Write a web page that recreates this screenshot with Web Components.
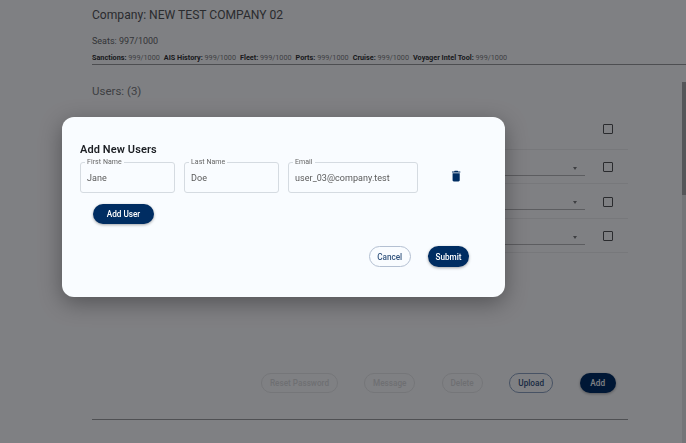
<!DOCTYPE html>
<html>
<head>
<meta charset="utf-8">
<title>Add New Users</title>
<style>
  html, body { margin: 0; height: 100%; overflow: hidden; background: #fff; }
  body { font-family: Roboto, "Liberation Sans", sans-serif; }
</style>
</head>
<body>
<company-page></company-page>
<add-users-dialog></add-users-dialog>

<script>
const navy = "#002d62";

class PillButton extends HTMLElement {
  constructor(...args) {
    super(...args);
    this.attachShadow({ mode: "open" }).innerHTML = `
      <style>
      :host {
        display: inline-flex;
        align-items: center;
        justify-content: center;
        box-sizing: border-box;
        width: var(--width, auto);
        height: var(--height, 20px);
        border-radius: 11px;
        font: 500 8.2px Roboto, sans-serif;
        white-space: nowrap;
      }
      :host([variant="primary"]) { background: ${navy}; color: #fff; box-shadow: 0 1px 3px rgba(0,0,0,.35); }
      :host([variant="outline"]) { border: 1px solid #b4c0d2; color: #33557f; }
      :host([variant="disabled"]) { border: 1px solid #eaeaea; color: #ddd; }
      :host([variant="upload"]) { border: 1px solid #8fa3c0; color: #36557f; }
      </style>
      <slot></slot>
    `;
  }
}

class OutlinedField extends HTMLElement {
  constructor(...args) {
    super(...args);
    const label = this.getAttribute("label") || "";
    const value = this.getAttribute("value") || "";
    this.attachShadow({ mode: "open" }).innerHTML = `
      <style>
      :host {
        display: block;
        position: relative;
        box-sizing: border-box;
        height: 31px;
        padding: 0 6px;
        border: 1px solid #d5dbe1;
        border-radius: 3px;
        color: #5a5a5a;
        font: 400 9px/30px Roboto, sans-serif;
        letter-spacing: .05px;
      }
      .label {
        position: absolute;
        top: -5px;
        left: 4px;
        padding: 0 2px;
        background: #f9fcff;
        color: #666;
        font-size: 7px;
        line-height: 9px;
      }
      </style>
      <span class="label">${label}</span>${value}
    `;
  }
}

class SeatStat extends HTMLElement {
  constructor(...args) {
    super(...args);
    this.attachShadow({ mode: "open" }).innerHTML = `
      <style>
      :host { display: inline; font: 400 7.25px Roboto, sans-serif; color: #808080; white-space: nowrap; }
      b { font-weight: 700; color: #333; }
      </style>
      <b>${this.getAttribute("name")}:</b> 999/1000
    `;
  }
}

class UserRow extends HTMLElement {
  constructor(...args) {
    super(...args);
    const select = this.hasAttribute("select");
    this.attachShadow({ mode: "open" }).innerHTML = `
      <style>
      :host {
        display: flex;
        align-items: center;
        justify-content: flex-end;
        box-sizing: border-box;
        height: 34.6px;
        border-bottom: 1px solid #eee;
      }
      .select {
        position: relative;
        align-self: flex-end;
        width: 85px;
        height: 25px;
        margin-right: 18px;
        margin-bottom: 7.5px;
        border-bottom: 1px solid #b8b8b8;
        box-sizing: border-box;
      }
      .select::after {
        content: "";
        position: absolute;
        right: 8px;
        top: 16px;
        border: 2.5px solid transparent;
        border-top: 3px solid #7c7c7c;
        border-bottom: 0;
      }
      .box {
        box-sizing: border-box;
        width: 10px;
        height: 10px;
        margin-right: 15px;
        border: 1.5px solid #555;
        border-radius: 1px;
      }
      :host([select]) .box { margin-top: 1.5px; }
      </style>
      ${select ? '<div class="select"></div>' : ""}
      <div class="box"></div>
    `;
  }
}

class CompanyPage extends HTMLElement {
  constructor(...args) {
    super(...args);
    this.attachShadow({ mode: "open" }).innerHTML = `
      <style>
      :host {
        display: block;
        position: relative;
        box-sizing: border-box;
        height: 443px;
        padding: 7px 0 0 92px;
        background: #fff;
        overflow: hidden;
      }
      h1 { margin: 0; font: 400 12.1px/16px Roboto, sans-serif; color: #555; }
      .seats { margin-top: 12px; font: 400 9px/12px Roboto, sans-serif; color: #686868; }
      .stats {
        display: flex;
        gap: 4px;
        margin-top: 6px;
        padding-bottom: 2px;
        border-bottom: 1px solid #9a9a9a;
        height: 9px;
        line-height: 9px;
      }
      h2 { margin: 19px 0 0; font: 400 11.5px/14px Roboto, sans-serif; color: #7c7c7c; }
      .rows { display: flex; flex-direction: column; width: 536px; margin-top: 11px; }
      .rows user-row:first-child { height: 40.5px; }
      .actions { display: flex; align-items: center; gap: 26.3px; margin: 119.5px 0 0 169px; }
      .rule { width: 536px; height: 1px; margin-top: 26.5px; background: #9e9e9e; }
      .track { position: absolute; top: 82px; bottom: 0; right: 0; width: 4px; background: #e8e8e8; }
      .thumb { position: absolute; top: 82px; right: 0; width: 4px; height: 113px; background: #aaa; }
      </style>
      <h1>Company: NEW TEST COMPANY 02</h1>
      <div class="seats">Seats: 997/1000</div>
      <div class="stats">
        <seat-stat name="Sanctions"></seat-stat>
        <seat-stat name="AIS History"></seat-stat>
        <seat-stat name="Fleet"></seat-stat>
        <seat-stat name="Ports"></seat-stat>
        <seat-stat name="Cruise"></seat-stat>
        <seat-stat name="Voyager Intel Tool"></seat-stat>
      </div>
      <h2>Users: (3)</h2>
      <div class="rows">
        <user-row></user-row>
        <user-row select></user-row>
        <user-row select></user-row>
        <user-row select></user-row>
      </div>
      <div class="actions">
        <pill-button variant="disabled" style="--width: 77px">Reset Password</pill-button>
        <pill-button variant="disabled" style="--width: 51px">Message</pill-button>
        <pill-button variant="disabled" style="--width: 41px">Delete</pill-button>
        <pill-button variant="upload" style="--width: 44.5px">Upload</pill-button>
        <pill-button variant="primary" style="--width: 36px">Add</pill-button>
      </div>
      <div class="rule"></div>
      <div class="track"></div>
      <div class="thumb"></div>
    `;
  }
}

class AddUsersDialog extends HTMLElement {
  constructor(...args) {
    super(...args);
    this.attachShadow({ mode: "open" }).innerHTML = `
      <style>
      :host {
        position: fixed;
        inset: 0;
        box-sizing: border-box;
        padding: 117px 0 0 62px;
        background: rgba(0,2,8,.5);
      }
      .dialog {
        box-sizing: border-box;
        width: 442.5px;
        height: 180px;
        padding: 26px 35.5px 0 18px;
        background: #f9fcff;
        border-radius: 12px;
        box-shadow: 0 6px 22px rgba(0,0,0,.35);
      }
      h3 { margin: 0; font: 600 11px/14px Roboto, sans-serif; color: #1c1f24; letter-spacing: .1px; }
      .fields { display: flex; align-items: center; gap: 9px; margin-top: 5px; }
      .fields outlined-field:nth-child(1),
      .fields outlined-field:nth-child(2) { width: 95px; }
      .fields outlined-field:nth-child(3) { width: 130px; }
      svg { width: 14.3px; height: 14.3px; margin: -2px 0 0 21.5px; }
      .add { display: flex; margin: 11px 0 0 13px; }
      .footer { display: flex; justify-content: flex-end; gap: 17.5px; margin-top: 22px; }
      </style>
      <div class="dialog">
        <h3>Add New Users</h3>
        <div class="fields">
          <outlined-field label="First Name" value="Jane"></outlined-field>
          <outlined-field label="Last Name" value="Doe"></outlined-field>
          <outlined-field label="Email" value="user_03@company.test"></outlined-field>
          <svg viewBox="0 0 24 24" fill="${navy}"><path d="M6 19c0 1.1.9 2 2 2h8c1.1 0 2-.9 2-2V7H6v12zM19 4h-3.5l-1-1h-5l-1 1H5v2h14V4z"/></svg>
        </div>
        <div class="add"><pill-button variant="primary" style="--width: 61px">Add User</pill-button></div>
        <div class="footer">
          <pill-button variant="outline" style="--width: 41.7px; --height: 21px">Cancel</pill-button>
          <pill-button variant="primary" style="--width: 41px; --height: 21px">Submit</pill-button>
        </div>
      </div>
    `;
  }
}

customElements.define("pill-button", PillButton);
customElements.define("outlined-field", OutlinedField);
customElements.define("seat-stat", SeatStat);
customElements.define("user-row", UserRow);
customElements.define("company-page", CompanyPage);
customElements.define("add-users-dialog", AddUsersDialog);
</script>
</body>
</html>
